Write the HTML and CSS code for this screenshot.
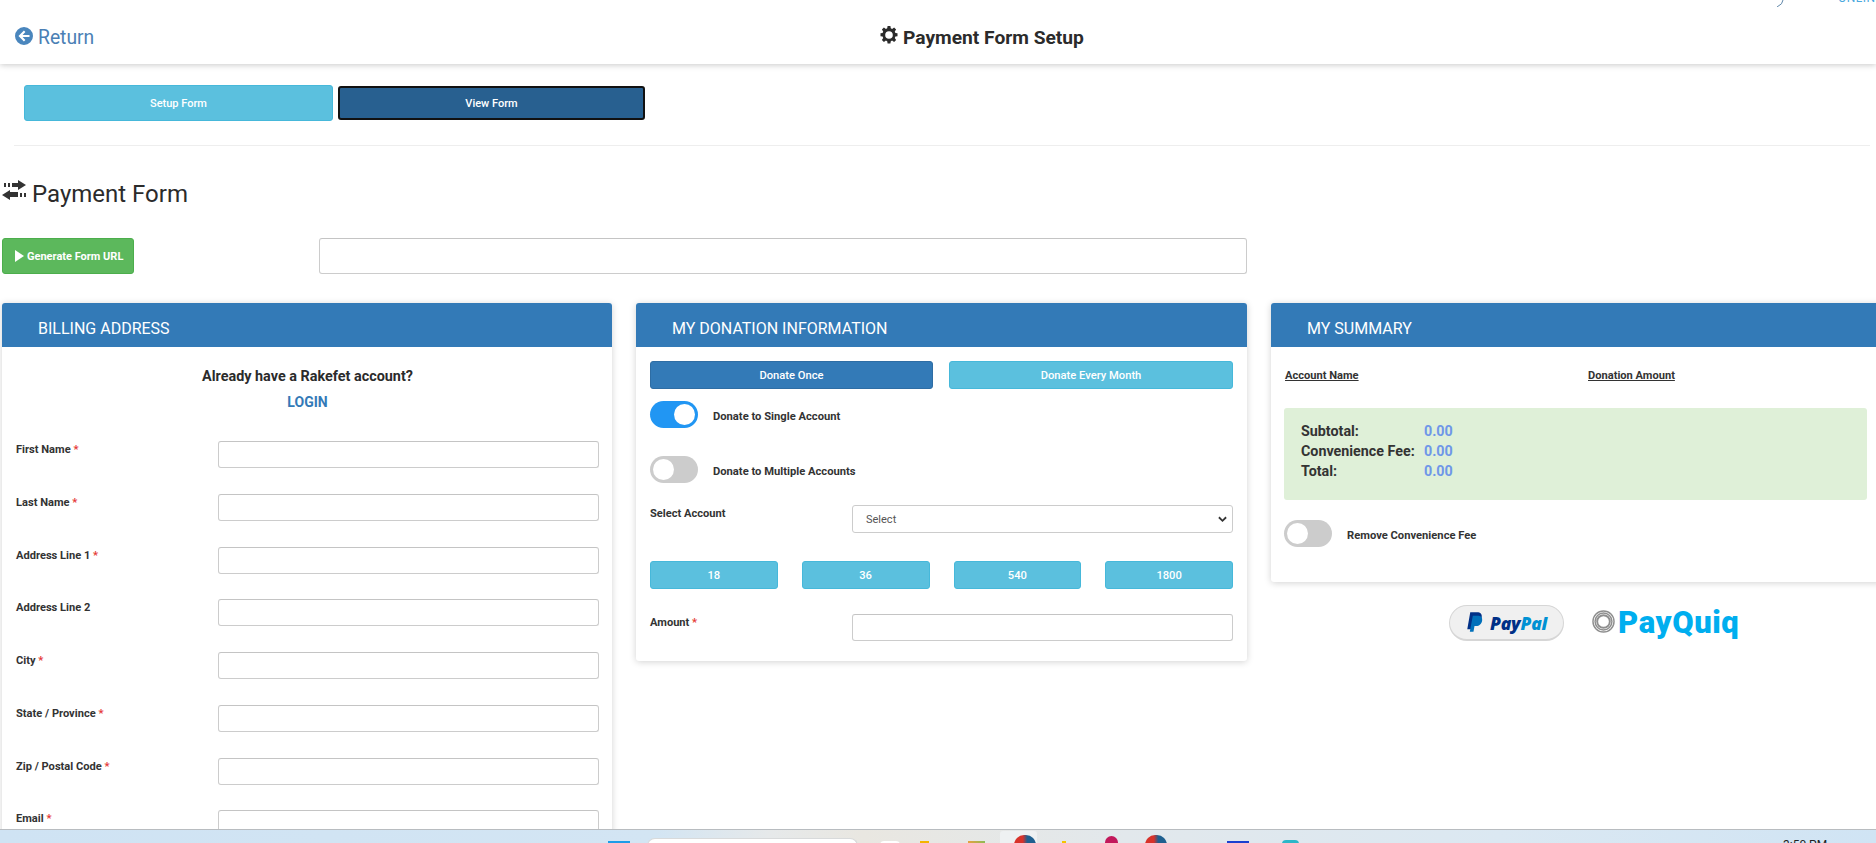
FILE: index.html
```html
<!DOCTYPE html>
<html lang="en">
<head>
<meta charset="utf-8">
<title>Payment Form Setup</title>
<link rel="stylesheet" href="styles.css">
</head>
<body>
<div class="page">
  <header class="topbar">
    <a class="return">
      <svg class="return-icon" viewBox="0 0 18 18"><path fill="#4a86bd" fill-rule="evenodd" d="M9 0a9 9 0 1 1 0 18A9 9 0 0 1 9 0zM8.900 3.600 3.500 9l5.400 5.400 1.500-1.500-2.800-2.800h6.900V7.900H7.600l2.800-2.800z"/></svg>
      <span>Return</span>
    </a>
    <h1 class="title">
      <svg class="gear" viewBox="0 0 18 18"><path fill="#2b2b2b" fill-rule="evenodd" d="M7.600 0h2.800l.4 2.300 1.300.6 2-1.300 2 2-1.300 2 .6 1.300 2.100.4v2.900l-2.100.4-.6 1.300 1.300 2-2 2-2-1.300-1.300.6-.4 2.300H7.600l-.4-2.300-1.300-.6-2 1.300-2-2 1.300-2-.6-1.300L.5 10.200V7.300l2.100-.4.6-1.300-1.300-2 2-2 2 1.300 1.300-.6zM9 5.200a3.800 3.800 0 1 0 0 7.600 3.800 3.800 0 0 0 0-7.600z"/></svg>
      Payment Form Setup
    </h1>
    <div class="brand">
      <svg class="brand-arc" viewBox="0 0 10 8"><path fill="none" stroke="#5f86a8" stroke-width="1" d="M7 0Q7 4 1 7"/></svg>
      <span class="brand-text">ONLINE</span>
    </div>
  </header>

  <nav class="tabs">
    <button class="tab tab-setup">Setup Form</button>
    <button class="tab tab-view">View Form</button>
  </nav>
  <hr class="rule">

  <h2 class="heading">
    <svg class="transfer" viewBox="0 0 24 20"><path fill="#333" d="M2 3h2v4H2zm4 0h2v4H6zm4 0h6V0l8 5-8 5V7h-6zM24 13h-2v4h2zm-4 0h-2v4h2zm-4-1H8V10L0 15l8 5v-3h8z"/></svg>
    Payment Form
  </h2>

  <div class="generate-row">
    <button class="generate"><svg class="play" viewBox="0 0 9 12"><path fill="#fff" d="M0 0l9 6-9 6z"/></svg>Generate Form URL</button>
    <input class="field url-field" type="text">
  </div>

  <main class="columns">
    <section class="panel">
      <h3 class="panel-head">BILLING ADDRESS</h3>
      <div class="panel-body billing-body">
        <p class="already">Already have a Rakefet account?</p>
        <p class="login">LOGIN</p>
        <div class="form-row"><label class="label">First Name <i>*</i></label><input class="field" type="text"></div>
        <div class="form-row"><label class="label">Last Name <i>*</i></label><input class="field" type="text"></div>
        <div class="form-row"><label class="label">Address Line 1 <i>*</i></label><input class="field" type="text"></div>
        <div class="form-row"><label class="label">Address Line 2</label><input class="field" type="text"></div>
        <div class="form-row"><label class="label">City <i>*</i></label><input class="field" type="text"></div>
        <div class="form-row"><label class="label">State / Province <i>*</i></label><input class="field" type="text"></div>
        <div class="form-row"><label class="label">Zip / Postal Code <i>*</i></label><input class="field" type="text"></div>
        <div class="form-row"><label class="label">Email <i>*</i></label><input class="field" type="text"></div>
      </div>
    </section>

    <section class="panel panel-short">
      <h3 class="panel-head">MY DONATION INFORMATION</h3>
      <div class="panel-body donation-body">
        <div class="freq">
          <button class="btn btn-primary">Donate Once</button>
          <button class="btn btn-info">Donate Every Month</button>
        </div>
        <div class="toggle-row"><span class="toggle on"></span><span class="toggle-label">Donate to Single Account</span></div>
        <div class="toggle-row"><span class="toggle"></span><span class="toggle-label">Donate to Multiple Accounts</span></div>
        <div class="select-row">
          <label class="label">Select Account</label>
          <div class="select-wrap">
            <span>Select</span>
            <svg class="chev" viewBox="0 0 10 7"><path fill="none" stroke="#333" stroke-width="2" d="M1 1l4 4 4-4"/></svg>
          </div>
        </div>
        <div class="amounts">
          <button class="btn btn-info">18</button>
          <button class="btn btn-info">36</button>
          <button class="btn btn-info">540</button>
          <button class="btn btn-info">1800</button>
        </div>
        <div class="amount-row">
          <label class="label">Amount <i>*</i></label>
          <input class="field" type="text">
        </div>
      </div>
    </section>

    <div class="summary-col">
      <section class="panel panel-short">
        <h3 class="panel-head">MY SUMMARY</h3>
        <div class="panel-body summary-body">
          <div class="summary-head"><u>Account Name</u><u>Donation Amount</u></div>
          <div class="totals">
            <div class="total-row"><b>Subtotal:</b><span>0.00</span></div>
            <div class="total-row"><b>Convenience Fee:</b><span>0.00</span></div>
            <div class="total-row"><b>Total:</b><span>0.00</span></div>
          </div>
          <div class="toggle-row fee-toggle"><span class="toggle"></span><span class="toggle-label">Remove Convenience Fee</span></div>
        </div>
      </section>
      <div class="pay-logos">
        <div class="paypal">
          <svg class="pp-mark" viewBox="0 0 20 24"><path fill="#003087" d="M5 0h8c4 0 6 2 5.500 5.500C18 10 15 12.500 11 12.500H8L6.500 20H1.500z"/><path fill="#0070ba" d="M8 4h7c3 .5 4.500 2.500 4 5.500C18.500 13.500 15.500 16 12 16H10l-1.200 7H4.500z"/></svg>
          <span class="pp-text"><span class="pp-pay">Pay</span><span class="pp-pal">Pal</span></span>
        </div>
        <div class="payquiq">
          <svg class="pq-ring" viewBox="0 0 24 24"><g fill="none" stroke="#8f8f8f"><circle cx="12" cy="12" r="11" stroke-width="1.500"/><circle cx="12" cy="12" r="8.800" stroke-width="1.500"/><circle cx="12" cy="12" r="6.600" stroke-width="2"/></g></svg>
          <span class="pq-text">PayQuiq</span>
        </div>
      </div>
    </div>
  </main>

  <footer class="taskbar">
    <span class="tb-win"></span>
    <span class="tb-search"></span>
    <span class="tb-white"></span>
    <span class="tb-yellow"></span>
    <span class="tb-orange"></span>
    <span class="tb-tile"><span class="tb-app"></span></span>
    <span class="tb-spark"></span>
    <span class="tb-badge"></span>
    <span class="tb-app tb-app2"></span>
    <span class="tb-blue"></span>
    <span class="tb-teal"></span>
    <span class="tb-time">3:50 PM</span>
  </footer>
</div>
</body>
</html>
```
FILE: styles.css
```css
* { box-sizing: border-box; }
html, body { margin: 0; padding: 0; background: #fff; }
.page {
  position: relative;
  width: 1876px;
  height: 843px;
  overflow: hidden;
  font-family: Roboto, "Liberation Sans", sans-serif;
  color: #333;
}
button { font-family: inherit; cursor: pointer; }

.topbar {
  position: relative;
  display: flex;
  align-items: center;
  height: 64px;
  padding: 10px 0 0 15px;
  background: #fff;
  box-shadow: 0 1px 6px rgba(0, 0, 0, .22);
}
.return {
  display: flex;
  align-items: center;
  gap: 5px;
  width: 865px;
  font-size: 19.300px;
  color: #4a7fb5;
}
.return-icon { width: 18px; height: 18px; margin-top: -3px; }
.title {
  display: flex;
  align-items: center;
  gap: 5px;
  margin: 0;
  font-size: 19.200px;
  font-weight: 700;
  color: #2b2b2b;
}
.gear { width: 18px; height: 18px; margin-top: -4px; }
.brand { position: absolute; top: 0; right: 0; height: 7px; width: 100px; overflow: hidden; }
.brand-arc { position: absolute; left: 0; top: 0; width: 10px; height: 8px; }
.brand-text {
  position: absolute;
  left: 62px;
  top: -8px;
  font-size: 12px;
  line-height: 12px;
  letter-spacing: .5px;
  color: #4aa8de;
}

.tabs { display: flex; align-items: center; gap: 5px; padding: 21px 0 0 24px; }
.tab { height: 36px; border-radius: 3px; color: #fff; font-size: 11px; font-weight: 500; }
.tab-setup { width: 309px; background: #5bc0de; border: 1px solid #46b8da; }
.tab-view { width: 307px; height: 34px; background: #286090; border: 2px solid #111; }
.rule { height: 1px; margin: 24px 6px 0 14px; border: 0; background: #eee; }

.heading {
  display: flex;
  align-items: center;
  gap: 6px;
  margin: 34px 0 0 2px;
  font-size: 24px;
  line-height: 28px;
  font-weight: 400;
  color: #2b2b2b;
}
.transfer { width: 24px; height: 20px; margin-top: -8px; }

.generate-row { display: flex; margin: 30px 0 0 2px; }
.generate {
  display: flex;
  align-items: center;
  gap: 3px;
  width: 132px;
  height: 36px;
  padding: 0 0 0 12px;
  background: #5cb85c;
  border: 1px solid #4cae4c;
  border-radius: 3px;
  color: #fff;
  font-size: 11px;
  font-weight: 700;
  white-space: nowrap;
}
.play { width: 9px; height: 12px; }
.field {
  display: block;
  flex: 1;
  min-width: 0;
  height: 27px;
  padding: 0 10px;
  background: #fff;
  border: 1px solid #ccc;
  border-top-color: #c4c4c4;
  border-radius: 3px;
}
.url-field { flex: none; width: 928px; height: 36px; margin-left: 185px; }

.columns {
  display: grid;
  grid-template-columns: 610px 611px 611px;
  column-gap: 24px;
  align-items: start;
  margin: 29px 0 0 2px;
}
.panel { background: #fff; border-radius: 3px; box-shadow: 0 1px 7px rgba(0, 0, 0, .18); }
.panel-head {
  display: flex;
  align-items: center;
  height: 44px;
  margin: 0;
  padding: 6px 0 0 36px;
  background: #337ab7;
  border-radius: 3px 3px 0 0;
  color: #fff;
  font-size: 16px;
  font-weight: 400;
}

.billing-body { height: 520px; padding: 0 13px 0 14px; }
.already { margin: 22px 0 0; text-align: center; font-size: 14.400px; line-height: 16px; font-weight: 700; color: #2b2b2b; }
.login { margin: 9px 0 0; text-align: center; font-size: 14px; line-height: 16px; font-weight: 700; color: #337ab7; }
.form-row { display: flex; align-items: flex-start; height: 52.750px; }
.login + .form-row { margin-top: 31px; }
.form-row .field { height: 27px; }
.label {
  flex: none;
  width: 202px;
  padding-top: 2px;
  font-size: 11.100px;
  line-height: 14px;
  font-weight: 700;
  color: #333;
}
.label i { color: #e53935; font-style: normal; }

.donation-body { padding: 14px 14px 20px; }
.freq { display: grid; grid-template-columns: 283px 284px; column-gap: 16px; }
.btn { height: 28px; border-radius: 3px; color: #fff; font-size: 11.200px; font-weight: 500; }
.btn-primary { background: #337ab7; border: 1px solid #2e6da4; }
.btn-info { background: #5bc0de; border: 1px solid #46b8da; }
.toggle-row { display: flex; align-items: center; gap: 15px; height: 27px; margin-top: 12px; }
.toggle-row + .toggle-row { margin-top: 28px; }
.toggle { position: relative; flex: none; width: 48px; height: 27px; border-radius: 14px; background: #ccc; }
.toggle::after {
  content: "";
  position: absolute;
  top: 3px;
  left: 3px;
  width: 21px;
  height: 21px;
  border-radius: 50%;
  background: #fff;
}
.toggle.on { background: #2196f3; }
.toggle.on::after { left: 24px; }
.toggle-label { padding-top: 3px; font-size: 11.200px; font-weight: 700; color: #333; }

.select-row { display: flex; align-items: flex-start; margin-top: 22px; }
.select-wrap {
  flex: 1;
  display: flex;
  align-items: center;
  justify-content: space-between;
  height: 28px;
  padding: 0 5px 0 13px;
  border: 1px solid #ccc;
  border-radius: 3px;
  font-size: 11px;
  color: #555;
}
.chev { width: 9px; height: 7px; }
.amounts { display: grid; grid-template-columns: repeat(4, 1fr); column-gap: 24px; margin-top: 28px; }
.amount-row { display: flex; align-items: flex-start; margin-top: 25px; }
.amount-row .field { height: 27px; }

.summary-body { padding: 0 15px 35px 13px; }
.summary-head {
  display: grid;
  grid-template-columns: 303px 1fr;
  padding: 21px 0 0 1px;
  font-size: 11.100px;
  line-height: 16px;
  font-weight: 700;
  color: #333;
}
.summary-head u { justify-self: start; }
.totals {
  margin-top: 24px;
  height: 92px;
  padding: 13px 17px;
  background: #dff0d8;
  border-radius: 3px;
}
.total-row { display: flex; font-size: 14.300px; line-height: 20px; }
.total-row b { width: 123px; font-weight: 700; color: #333; }
.total-row span { font-weight: 700; color: #6f97e8; }
.fee-toggle { margin-top: 20px; }

.pay-logos { display: flex; align-items: center; gap: 28px; margin: 23px 0 0 178px; }
.paypal {
  display: flex;
  align-items: center;
  gap: 7px;
  width: 115px;
  height: 36px;
  padding-left: 16px;
  background: #f0f0f0;
  border: 1px solid #d6d6d6;
  border-bottom-width: 2px;
  border-radius: 18px;
}
.pp-mark { width: 17px; height: 21px; }
.pp-text { font-family: "Open Sans", Roboto, sans-serif; font-size: 17.500px; font-weight: 800; font-style: italic; letter-spacing: -.2px; }
.pp-pay { color: #003087; }
.pp-pal { color: #0091d3; }
.payquiq { display: flex; align-items: center; gap: 3px; }
.pq-ring { width: 23px; height: 23px; margin-top: -3px; }
.pq-text { font-size: 31px; line-height: 36px; font-weight: 900; color: #00aeef; letter-spacing: .6px; }

.taskbar {
  position: absolute;
  left: 0;
  right: 0;
  bottom: 0;
  display: flex;
  align-items: flex-start;
  height: 14px;
  overflow: hidden;
  padding-left: 608px;
  background: linear-gradient(90deg, #cfe3f3 0%, #d3e5f3 35%, #e6e9ea 41%, #e9e7e1 46%, #e2e8ec 60%, #dbe8f2 80%, #d0e4f4 100%);
  border-top: 1px solid #b8bcc0;
}
.tb-win { width: 22px; height: 4px; margin-top: 11px; background: #1c9ce8; }
.tb-search { width: 211px; height: 8px; margin: 8px 0 0 17px; background: #fff; border-radius: 8px 8px 0 0; border: 1px solid #d8dadb; }
.tb-white { width: 20px; height: 4px; margin: 11px 0 0 22px; background: #fff; border-radius: 4px 4px 0 0; }
.tb-yellow { width: 9px; height: 4px; margin: 11px 0 0 20px; background: #f4b400; }
.tb-orange { width: 17px; height: 4px; margin: 11px 0 0 39px; background: linear-gradient(90deg, #e8a040, #8dbb55); }
.tb-tile { width: 37px; height: 14px; margin: 1px 0 0 15px; padding: 4px 0 0 14px; background: #eef1f2; border-radius: 3px 3px 0 0; }
.tb-app { display: block; width: 22px; height: 12px; background: linear-gradient(90deg, #d8322a 40%, #1f5f8f 60%); border-radius: 10px 10px 0 0; }
.tb-spark { width: 4px; height: 4px; margin: 11px 0 0 25px; background: #f4c400; }
.tb-badge { width: 13px; height: 10px; margin: 6px 0 0 39px; background: #c2185b; border-radius: 7px 7px 0 0; }
.tb-app2 { margin: 5px 0 0 27px; }
.tb-blue { width: 22px; height: 3px; margin: 11px 0 0 60px; background: #1a3fd0; }
.tb-teal { width: 17px; height: 4px; margin: 10px 0 0 33px; background: #2bb7c8; border-radius: 8px 8px 0 0; }
.tb-time { margin: 8px 0 0 484px; font-size: 12px; line-height: 14px; color: #222; white-space: nowrap; }
```
